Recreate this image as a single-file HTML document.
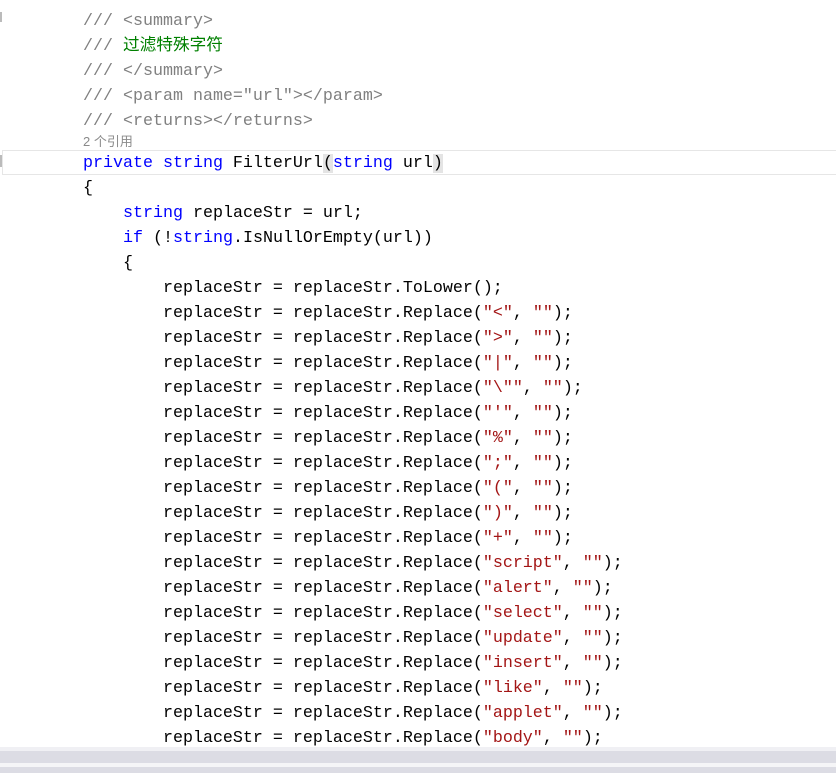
<!DOCTYPE html>
<html><head><meta charset="utf-8"><style>
html,body{margin:0;padding:0;background:#fff;width:836px;height:773px;overflow:hidden}
.c{position:absolute;left:83px;font-family:"Liberation Mono","Noto Sans CJK SC",monospace;font-size:16.67px;color:#000;white-space:pre;line-height:25px;height:25px;margin-top:2px}
.g{color:#808080}.gr{color:#008000}.k{color:#0000ff}.s{color:#a31515}
.lens{position:absolute;left:83px;top:133px;font-family:"Liberation Sans","Noto Sans CJK SC",sans-serif;font-size:13px;color:#8a8a8a;line-height:17px}
.hl{position:absolute;left:2px;right:0;top:150px;height:23px;border:1px solid #e6e6e6;border-right:none}
.p{background:#e4e4e4}
</style></head><body>
<div class="hl"></div>
<div style="position:absolute;left:0;top:12px;width:2px;height:10px;background:#bbb"></div>
<div style="position:absolute;left:0;top:155px;width:2px;height:12px;background:#bbb"></div>
<div class="c g" style="top:7px">/// &lt;summary&gt;</div>
<div class="c g" style="top:32px">/// <span class="gr">过滤特殊字符</span></div>
<div class="c g" style="top:57px">/// &lt;/summary&gt;</div>
<div class="c g" style="top:82px">/// &lt;param name="url"&gt;&lt;/param&gt;</div>
<div class="c g" style="top:107px">/// &lt;returns&gt;&lt;/returns&gt;</div>
<div class="lens">2 个引用</div>
<div class="c" style="top:149px"><span class="k">private string</span> FilterUrl<span class="p">(</span><span class="k">string</span> url<span class="p">)</span></div>
<div class="c" style="top:174px">{</div>
<div class="c" style="top:199px">    <span class="k">string</span> replaceStr = url;</div>
<div class="c" style="top:224px">    <span class="k">if</span> (!<span class="k">string</span>.IsNullOrEmpty(url))</div>
<div class="c" style="top:249px">    {</div>
<div class="c" style="top:274px">        replaceStr = replaceStr.ToLower();</div>
<div class="c" style="top:299px">        replaceStr = replaceStr.Replace(<span class="s">"&lt;"</span>, <span class="s">""</span>);</div>
<div class="c" style="top:324px">        replaceStr = replaceStr.Replace(<span class="s">"&gt;"</span>, <span class="s">""</span>);</div>
<div class="c" style="top:349px">        replaceStr = replaceStr.Replace(<span class="s">"|"</span>, <span class="s">""</span>);</div>
<div class="c" style="top:374px">        replaceStr = replaceStr.Replace(<span class="s">"\""</span>, <span class="s">""</span>);</div>
<div class="c" style="top:399px">        replaceStr = replaceStr.Replace(<span class="s">"'"</span>, <span class="s">""</span>);</div>
<div class="c" style="top:424px">        replaceStr = replaceStr.Replace(<span class="s">"%"</span>, <span class="s">""</span>);</div>
<div class="c" style="top:449px">        replaceStr = replaceStr.Replace(<span class="s">";"</span>, <span class="s">""</span>);</div>
<div class="c" style="top:474px">        replaceStr = replaceStr.Replace(<span class="s">"("</span>, <span class="s">""</span>);</div>
<div class="c" style="top:499px">        replaceStr = replaceStr.Replace(<span class="s">")"</span>, <span class="s">""</span>);</div>
<div class="c" style="top:524px">        replaceStr = replaceStr.Replace(<span class="s">"+"</span>, <span class="s">""</span>);</div>
<div class="c" style="top:549px">        replaceStr = replaceStr.Replace(<span class="s">"script"</span>, <span class="s">""</span>);</div>
<div class="c" style="top:574px">        replaceStr = replaceStr.Replace(<span class="s">"alert"</span>, <span class="s">""</span>);</div>
<div class="c" style="top:599px">        replaceStr = replaceStr.Replace(<span class="s">"select"</span>, <span class="s">""</span>);</div>
<div class="c" style="top:624px">        replaceStr = replaceStr.Replace(<span class="s">"update"</span>, <span class="s">""</span>);</div>
<div class="c" style="top:649px">        replaceStr = replaceStr.Replace(<span class="s">"insert"</span>, <span class="s">""</span>);</div>
<div class="c" style="top:674px">        replaceStr = replaceStr.Replace(<span class="s">"like"</span>, <span class="s">""</span>);</div>
<div class="c" style="top:699px">        replaceStr = replaceStr.Replace(<span class="s">"applet"</span>, <span class="s">""</span>);</div>
<div class="c" style="top:724px">        replaceStr = replaceStr.Replace(<span class="s">"body"</span>, <span class="s">""</span>);</div>
<div style="position:absolute;left:0;right:0;top:747px;height:4px;background:#f0f0f4"></div>
<div style="position:absolute;left:0;right:0;top:751px;height:12px;background:#dcdce4"></div>
<div style="position:absolute;left:0;right:0;top:763px;height:4px;background:#f5f5f7"></div>
<div style="position:absolute;left:0;right:0;top:767px;height:6px;background:#dcdce4"></div>
</body></html>
